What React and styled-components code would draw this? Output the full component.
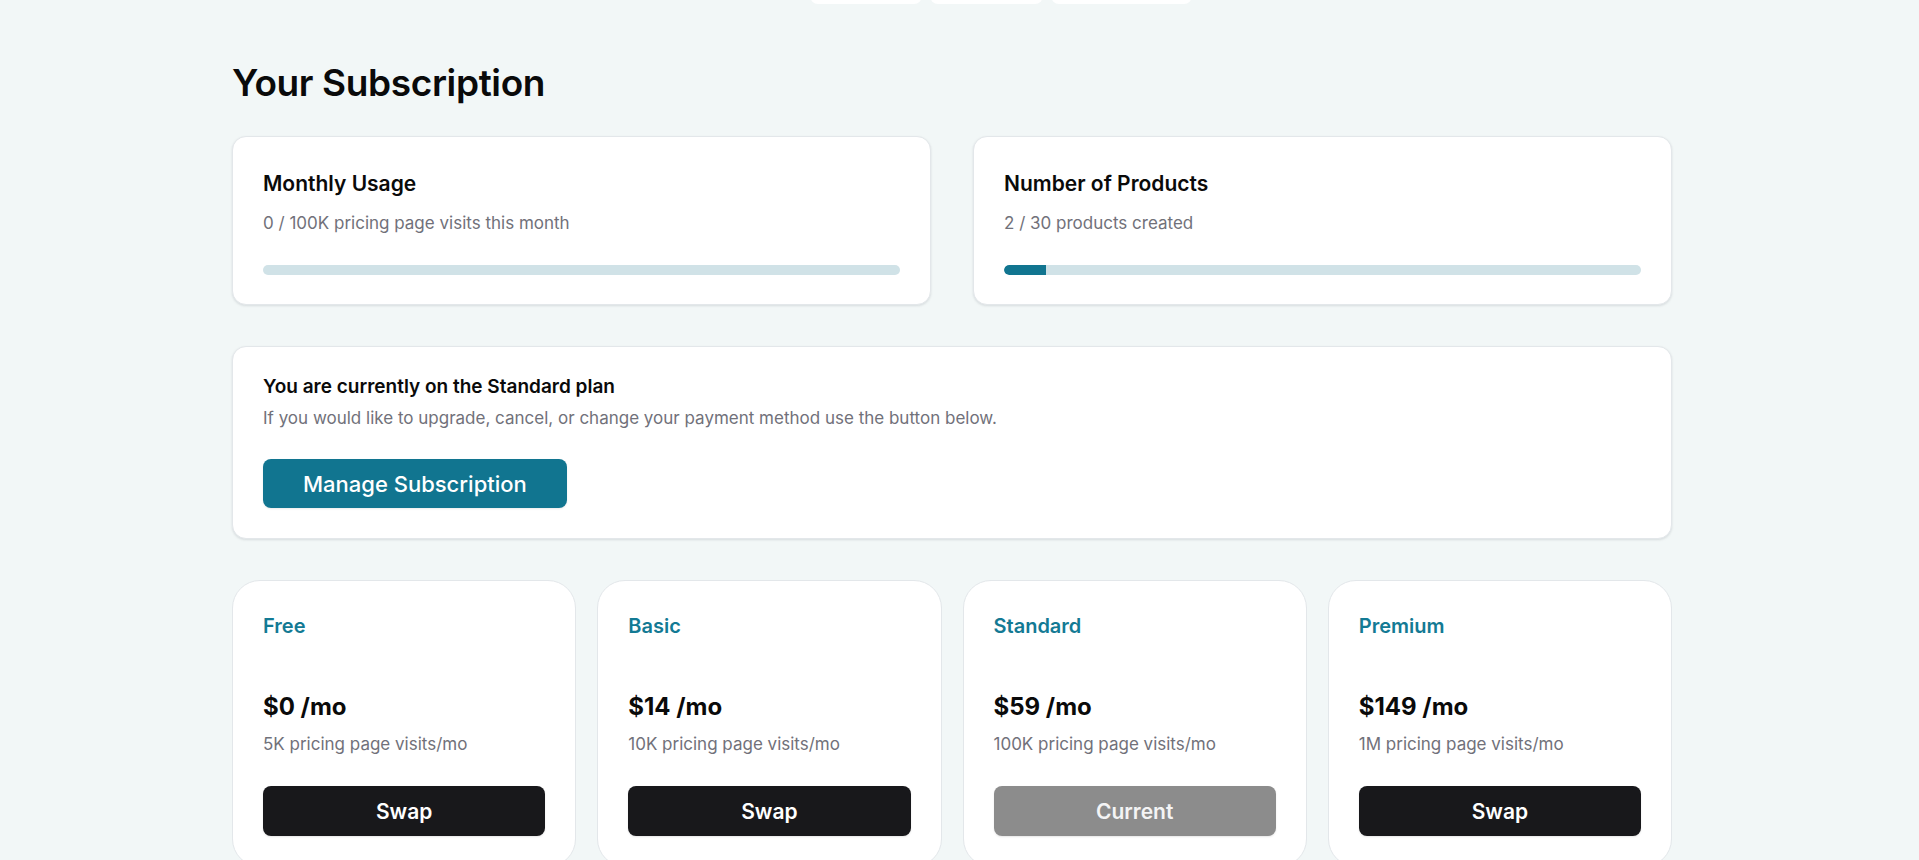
import React, { useLayoutEffect } from "react";
import styled, { createGlobalStyle } from "styled-components";

const GlobalStyle = createGlobalStyle`
  html { overflow-y: scroll; scrollbar-gutter: stable; }
  body {
    margin: 0;
    padding-right: 15px;
    background: #f2f7f7;
    font-family: Inter, "Liberation Sans", Arial, sans-serif;
    color: #0a0a0a;
    -webkit-font-smoothing: antialiased;
  }
  * { box-sizing: border-box; }
`;

const Page = styled.div`
  max-width: 1440px;
  margin: 0 auto;
  padding-bottom: 284px;
`;

const TopNav = styled.nav`
  display: flex;
  justify-content: center;
  gap: 8px;
  padding: 20px 0 0 98px;
`;

const NavPill = styled.a`
  display: block;
  width: ${(p) => p.$w}px;
  height: 49px;
  background: #ffffff;
  border-radius: 8px;
`;

const Main = styled.main`
  display: flex;
  flex-direction: column;
  padding-top: 57px;
`;

const Heading = styled.h1`
  margin: 0 0 31px;
  font-size: 37px;
  line-height: 44px;
  font-weight: 600;
  letter-spacing: -0.01em;
`;

const Stack = styled.div`
  display: flex;
  flex-direction: column;
  gap: 41px;
`;

const UsageGrid = styled.div`
  display: grid;
  grid-template-columns: 1fr 1fr;
  gap: 42px;
`;

const Card = styled.section`
  background: #ffffff;
  border: 1px solid #e3e7ea;
  border-radius: 14px;
  box-shadow: 0 1px 3px rgba(16, 24, 40, 0.08), 0 1px 2px rgba(16, 24, 40, 0.04);
  padding: ${(p) => p.$pad};
`;

const CardTitle = styled.h2`
  margin: 0;
  font-size: 21px;
  line-height: 30px;
  font-weight: 600;
`;

const Muted = styled.p`
  margin: ${(p) => p.$mt || 0}px 0 0;
  font-size: 17px;
  line-height: 24px;
  color: #71717a;
`;

const Track = styled.div`
  margin-top: 30px;
  height: 10px;
  border-radius: 999px;
  background: #d0e2e7;
  overflow: hidden;
`;

const Fill = styled.div`
  height: 100%;
  background: #117590;
  border-radius: 999px 0 0 999px;
`;

const PlanTitle = styled.h3`
  margin: 0;
  font-size: 19px;
  line-height: 24px;
  font-weight: 600;
`;

const PrimaryButton = styled.button`
  align-self: flex-start;
  margin-top: 29px;
  height: 49px;
  padding: 0 40px;
  border: none;
  border-radius: 8px;
  background: #117590;
  color: #ffffff;
  font-family: inherit;
  font-size: 22px;
  font-weight: 500;
  box-shadow: 0 1px 2px rgba(0, 0, 0, 0.08);
  cursor: pointer;
`;

const CurrentCard = styled(Card)`
  display: flex;
  flex-direction: column;
`;

const PlansGrid = styled.div`
  display: grid;
  grid-template-columns: repeat(4, 1fr);
  gap: 21px;
`;

const PlanCard = styled.article`
  display: flex;
  flex-direction: column;
  background: #ffffff;
  border: 1px solid #e3e7ea;
  border-radius: 28px;
  padding: 31px 30px 30px;
`;

const PlanName = styled.h4`
  margin: 0;
  font-size: 20px;
  line-height: 28px;
  font-weight: 600;
  color: #137a94;
`;

const Price = styled.div`
  margin-top: 51px;
  font-size: 24px;
  line-height: 32px;
  font-weight: 700;
`;

const PlanButton = styled.button`
  margin-top: 30px;
  height: 50px;
  width: 100%;
  border: none;
  border-radius: 8px;
  background: ${(p) => (p.$current ? "#8c8c8c" : "#18181b")};
  color: ${(p) => (p.$current ? "#f4f4f5" : "#ffffff")};
  font-family: inherit;
  font-size: 21px;
  font-weight: 600;
  box-shadow: 0 1px 2px rgba(0, 0, 0, 0.1);
  cursor: pointer;
`;

const plans = [
  { name: "Free", price: "$0 /mo", visits: "5K pricing page visits/mo" },
  { name: "Basic", price: "$14 /mo", visits: "10K pricing page visits/mo" },
  { name: "Standard", price: "$59 /mo", visits: "100K pricing page visits/mo", current: true },
  { name: "Premium", price: "$149 /mo", visits: "1M pricing page visits/mo" },
];

export default function App() {
  useLayoutEffect(() => {
    window.scrollTo(0, 65);
  }, []);

  return (
    <>
      <GlobalStyle />
      <Page>
        <TopNav>
          <NavPill $w={112} aria-label="Dashboard" />
          <NavPill $w={113} aria-label="Products" />
          <NavPill $w={141} aria-label="Subscription" />
        </TopNav>
        <Main>
          <Heading>Your Subscription</Heading>
          <Stack>
            <UsageGrid>
              <Card $pad="32px 30px 29px">
                <CardTitle>Monthly Usage</CardTitle>
                <Muted $mt={12}>0 / 100K pricing page visits this month</Muted>
                <Track>
                  <Fill style={{ width: "0%" }} />
                </Track>
              </Card>
              <Card $pad="32px 30px 29px">
                <CardTitle>Number of Products</CardTitle>
                <Muted $mt={12}>2 / 30 products created</Muted>
                <Track>
                  <Fill style={{ width: `${(2 / 30) * 100}%` }} />
                </Track>
              </Card>
            </UsageGrid>

            <CurrentCard $pad="28px 30px 30px">
              <PlanTitle>You are currently on the Standard plan</PlanTitle>
              <Muted $mt={7}>
                If you would like to upgrade, cancel, or change your payment method use the button below.
              </Muted>
              <PrimaryButton>Manage Subscription</PrimaryButton>
            </CurrentCard>

            <PlansGrid>
              {plans.map((p) => (
                <PlanCard key={p.name}>
                  <PlanName>{p.name}</PlanName>
                  <Price>{p.price}</Price>
                  <Muted $mt={9}>{p.visits}</Muted>
                  <PlanButton $current={p.current}>{p.current ? "Current" : "Swap"}</PlanButton>
                </PlanCard>
              ))}
            </PlansGrid>
          </Stack>
        </Main>
      </Page>
    </>
  );
}
